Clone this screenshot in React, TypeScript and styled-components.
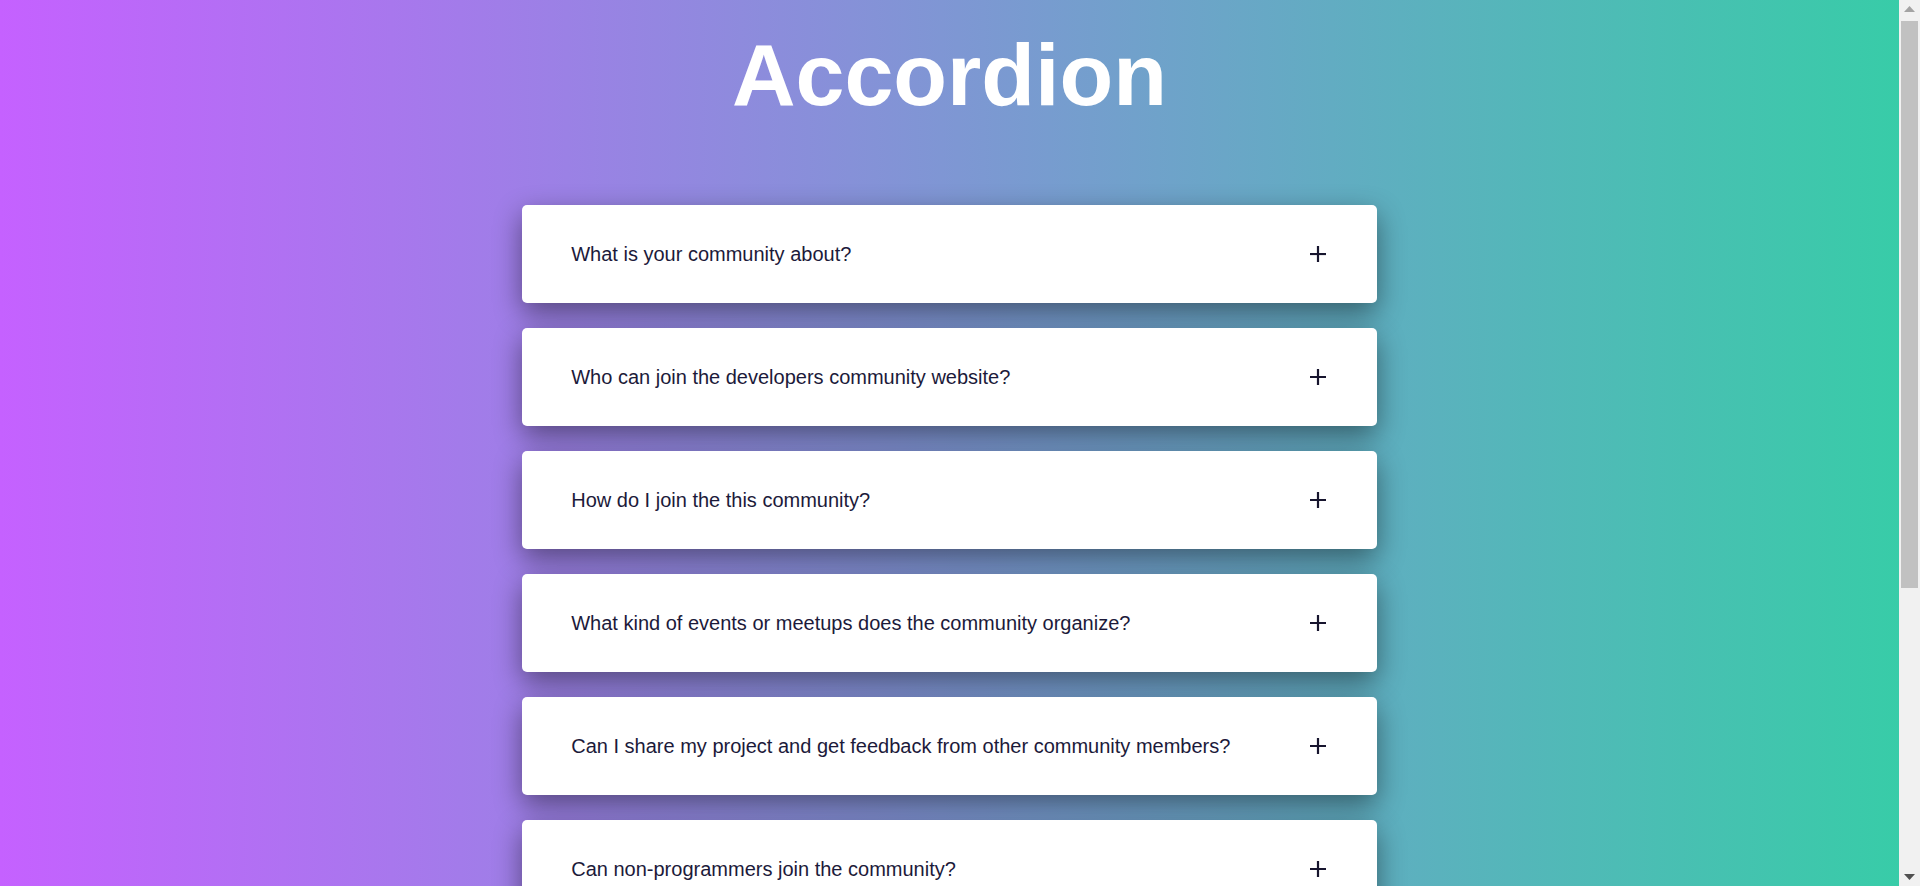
import React, { useState } from "react";
import styled, { createGlobalStyle } from "styled-components";

const GlobalStyle = createGlobalStyle`
  html, body {
    margin: 0;
    padding: 0;
  }
  body {
    min-height: 100vh;
    background: linear-gradient(90deg, #c561ff 0%, #38cca8 calc(100% - 21px), #38cca8 100%);
    font-family: "Liberation Sans", Arial, sans-serif;
  }
  * { box-sizing: border-box; }
`;

const Page = styled.main`
  margin-right: 21px;
  padding: 24px 0 40px;
`;

const Title = styled.h1`
  margin: 0 0 79px;
  text-align: center;
  color: #ffffff;
  font-size: 88px;
  font-weight: 700;
  line-height: normal;
`;

const List = styled.div`
  width: 45%;
  margin: 0 auto;
  display: flex;
  flex-direction: column;
  gap: 25px;
`;

const Item = styled.div`
  background: #ffffff;
  border-radius: 5px;
  box-shadow: 0 10px 28px rgba(0, 0, 0, 0.45);
  overflow: hidden;
`;

const Header = styled.button`
  width: 100%;
  height: 98px;
  padding: 0 51px 0 49px;
  display: flex;
  align-items: center;
  justify-content: space-between;
  border: none;
  background: transparent;
  cursor: pointer;
  font-family: "Liberation Sans", Arial, sans-serif;
  font-size: 20px;
  color: #1c1a3a;
  text-align: left;
`;

const Answer = styled.div<{ $open: boolean }>`
  display: ${(p) => (p.$open ? "block" : "none")};
  padding: 0 50px 30px;
  font-size: 17px;
  line-height: 1.5;
  color: #3a3a55;
`;

const PlusIcon = styled.svg`
  width: 16px;
  height: 16px;
  flex-shrink: 0;
`;

const Plus = ({ open }: { open: boolean }) => (
  <PlusIcon viewBox="0 0 16 16">
    <line x1="0" y1="8" x2="16" y2="8" stroke="#17152e" strokeWidth="2.2" />
    {!open && <line x1="8" y1="0" x2="8" y2="16" stroke="#17152e" strokeWidth="2.2" />}
  </PlusIcon>
);

/* Classic browser scrollbar, drawn over the right edge of the viewport */
const ScrollTrack = styled.div`
  position: fixed;
  top: 0;
  right: 0;
  width: 21px;
  height: 100vh;
  background: #f1f1f1;
`;

const ScrollThumb = styled.div`
  position: absolute;
  top: 21px;
  left: 2px;
  width: 17px;
  height: 567px;
  background: #c1c1c1;
`;

const Arrow = styled.svg<{ $down?: boolean }>`
  position: absolute;
  left: 5px;
  width: 11px;
  height: 6px;
  ${(p) => (p.$down ? "bottom: 6px;" : "top: 6px;")}
`;

const faqs: { q: string; a: string }[] = [
  { q: "What is your community about?", a: "We are a community of developers who share knowledge, projects and ideas." },
  { q: "Who can join the developers community website?", a: "Anyone interested in software development is welcome to join." },
  { q: "How do I join the this community?", a: "Sign up with your email address and complete your profile." },
  { q: "What kind of events or meetups does the community organize?", a: "We organize workshops, hackathons, talks and casual meetups." },
  { q: "Can I share my project and get feedback from other community members?", a: "Yes, post your project in the showcase section to receive feedback." },
  { q: "Can non-programmers join the community?", a: "Absolutely, designers, writers and learners are all welcome." },
  { q: "Is there a membership fee?", a: "No, joining the community is completely free." },
  { q: "How can I contribute to the community?", a: "You can write articles, answer questions and mentor others." },
  { q: "How can I contact the community team?", a: "Send us a message through the contact page." },
];

export default function App() {
  const [open, setOpen] = useState<number | null>(null);
  return (
    <>
      <GlobalStyle />
      <Page>
        <Title>Accordion</Title>
        <List>
          {faqs.map((f, i) => (
            <Item key={i}>
              <Header onClick={() => setOpen(open === i ? null : i)}>
                <span>{f.q}</span>
                <Plus open={open === i} />
              </Header>
              <Answer $open={open === i}>{f.a}</Answer>
            </Item>
          ))}
        </List>
      </Page>
      <ScrollTrack aria-hidden="true">
        <Arrow viewBox="0 0 11 6">
          <polygon points="0,6 5.5,0 11,6" fill="#a3a3a3" />
        </Arrow>
        <ScrollThumb />
        <Arrow $down viewBox="0 0 11 6">
          <polygon points="0,0 11,0 5.5,6" fill="#505050" />
        </Arrow>
      </ScrollTrack>
    </>
  );
}
